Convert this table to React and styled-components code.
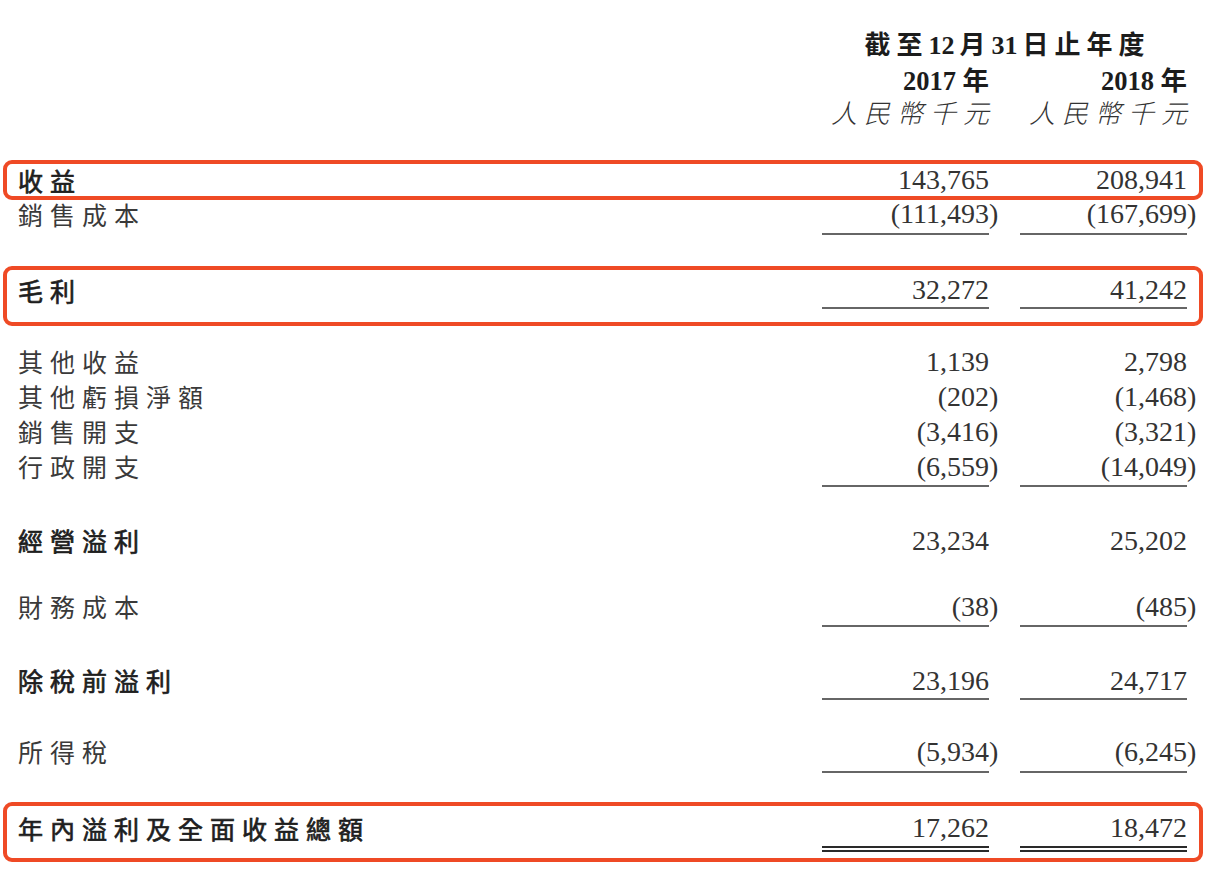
import React from "react";
import styled, { createGlobalStyle } from "styled-components";

const GlobalStyle = createGlobalStyle`
  html, body {
    margin: 0;
    padding: 0;
    background: #ffffff;
  }
  body {
    font-family: "Noto Sans CJK TC", "Noto Sans", sans-serif;
    color: #222;
  }
`;

const rows = [
  { key: "cos", label: "銷售成本", a: "111,493", b: "167,699", neg: true },
];

const Page = styled.main`
  width: 1210px;
  height: 884px;
  box-sizing: border-box;
  padding-top: 24px;
  background: #fff;
  overflow: hidden;
  --pl: 18px;
  --pr: 23px;
`;

const Grid = styled.div`
  display: grid;
  grid-template-columns: 1fr 167px 167px;
  column-gap: 31px;
  padding: 0 var(--pr) 0 var(--pl);
`;

const HeadLine = styled(Grid)`
  height: 34.5px;
  align-items: center;
`;

const Title = styled.div`
  grid-column: 2 / 4;
  text-align: center;
  font-family: "Liberation Serif", "Noto Sans CJK TC", serif;
  font-weight: 700;
  font-size: 26px;
  letter-spacing: 6px;
  margin-right: -6px;
  color: #1c1c1c;
  white-space: nowrap;
`;

const Digits = styled.span`
  letter-spacing: 0;
  margin-right: 5px;
`;

const Year = styled.div`
  grid-column: ${(p) => p.$col};
  text-align: right;
  font-family: "Liberation Serif", "Noto Sans CJK TC", serif;
  font-weight: 700;
  font-size: 26.5px;
  color: #1c1c1c;
  white-space: nowrap;
`;

const Unit = styled.div`
  grid-column: ${(p) => p.$col};
  text-align: right;
  font-family: "Noto Sans CJK TC", sans-serif;
  font-style: italic;
  font-weight: 300;
  font-size: 26px;
  letter-spacing: 7px;
  margin-right: -7px;
  color: #333;
  white-space: nowrap;
`;

const Box = styled.section`
  margin: ${(p) => p.$mt}px 7px 0 3px;
  padding: ${(p) => p.$pt}px 0 ${(p) => p.$pb}px;
  border: 4px solid #ef4a25;
  border-radius: 9px;
  --pl: 11px;
  --pr: 12px;
`;

const Row = styled(Grid)`
  height: ${(p) => p.$h || 35}px;
  margin-top: ${(p) => p.$mt || 0}px;
  align-items: center;
`;

const Label = styled.div`
  font-size: 25px;
  letter-spacing: 7px;
  font-weight: 400;
  -webkit-text-stroke: ${(p) => (p.$bold ? "0.7px #1e1e1e" : "0")};
  color: ${(p) => (p.$bold ? "#1e1e1e" : "#3a3a3a")};
  white-space: nowrap;
  line-height: 1;
`;

const Num = styled.div`
  text-align: right;
  font-family: "Liberation Serif", "Times New Roman", serif;
  font-size: 28px;
  color: #333;
  line-height: 1;
  white-space: nowrap;
`;

const Close = styled.span`
  margin-right: -0.333em;
`;

const RuleRow = styled(Grid)`
  margin-top: ${(p) => p.$mt || 0}px;
`;

const Rule = styled.div`
  grid-column: ${(p) => p.$col};
  height: ${(p) => (p.$double ? 2 : 0)}px;
  border-top: 2px solid ${(p) => (p.$double ? "#2a2a2a" : "#666")};
  border-bottom: ${(p) => (p.$double ? "2px solid #2a2a2a" : "none")};
`;

const Value = ({ v, neg }) =>
  neg ? (
    <Num>
      ({v}
      <Close>)</Close>
    </Num>
  ) : (
    <Num>{v}</Num>
  );

const Line = ({ label, a, b, neg, bold, h, mt }) => (
  <Row $h={h} $mt={mt}>
    <Label $bold={bold}>{label}</Label>
    <Value v={a} neg={neg} />
    <Value v={b} neg={neg} />
  </Row>
);

const Underline = ({ mt, double }) => (
  <RuleRow $mt={mt}>
    <Rule $col={2} $double={double} />
    <Rule $col={3} $double={double} />
  </RuleRow>
);

export default function App() {
  return (
    <>
      <GlobalStyle />
      <Page>
        <HeadLine>
          <Title>
            截至<Digits>12</Digits>月<Digits>31</Digits>日止年度
          </Title>
        </HeadLine>
        <HeadLine>
          <Year $col={2}>2017 年</Year>
          <Year $col={3}>2018 年</Year>
        </HeadLine>
        <HeadLine>
          <Unit $col={2}>人民幣千元</Unit>
          <Unit $col={3}>人民幣千元</Unit>
        </HeadLine>

        <Box $mt={32.5} $pt={0} $pb={0}>
          <Line label="收益" a="143,765" b="208,941" bold h={32} />
        </Box>
        {rows.map((r) => (
          <Line key={r.key} {...r} h={26} />
        ))}
        <Underline mt={7} />

        <Box $mt={31} $pt={4} $pb={13}>
          <Line label="毛利" a="32,272" b="41,242" bold h={32} />
          <Underline mt={1} />
        </Box>

        <Line label="其他收益" a="1,139" b="2,798" mt={18} />
        <Line label="其他虧損淨額" a="202" b="1,468" neg />
        <Line label="銷售開支" a="3,416" b="3,321" neg />
        <Line label="行政開支" a="6,559" b="14,049" neg />
        <Underline mt={1} />

        <Line label="經營溢利" a="23,234" b="25,202" bold mt={36} />

        <Line label="財務成本" a="38" b="485" neg mt={31} />
        <Underline mt={1} />

        <Line label="除稅前溢利" a="23,196" b="24,717" bold mt={36} />
        <Underline mt={0} />

        <Line label="所得稅" a="5,934" b="6,245" neg mt={34} />
        <Underline mt={2} />

        <Box $mt={29} $pt={6} $pb={6}>
          <Line label="年內溢利及全面收益總額" a="17,262" b="18,472" bold h={32} />
          <Underline mt={2} double />
        </Box>
      </Page>
    </>
  );
}
